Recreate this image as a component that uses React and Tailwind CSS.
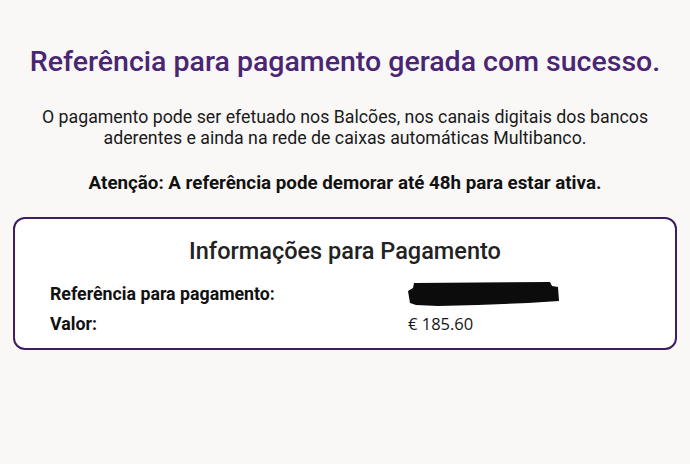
import React from 'react';

const Redacted = () => (
  <svg width="152" height="25" viewBox="0 0 152 25" className="block">
    <path
      d="M6 1 L142 0 L144 4 L150 5 L151 19 L120 21 L70 23 L30 24 L8 23 L2 21 L0 9 L5 6 Z"
      fill="#0c0c0c"
    />
  </svg>
);

export default function App() {
  return (
    <div
      className="min-h-screen w-full bg-[#f9f8f7] flex flex-col items-center pt-[44px] px-[13px]"
      style={{ fontFamily: 'Roboto, "Noto Sans", sans-serif' }}
    >
      <h1 className="text-[28.5px] leading-[36px] font-medium text-[#4a2572] text-center whitespace-nowrap">
        Referência para pagamento gerada com sucesso.
      </h1>
      <p className="mt-[27px] text-[17.75px] leading-[21px] text-[#1a1a1a] text-center whitespace-nowrap">
        O pagamento pode ser efetuado nos Balcões, nos canais digitais dos bancos
        <br />
        aderentes e ainda na rede de caixas automáticas Multibanco.
      </p>
      <p className="mt-[24px] text-[18.75px] leading-[21px] font-bold text-[#111] text-center whitespace-nowrap">
        Atenção: A referência pode demorar até 48h para estar ativa.
      </p>
      <div className="mt-[23px] w-full bg-white border-2 border-[#3d1f60] rounded-[12px] pt-[18px] pb-[12px] px-[35px]">
        <h2 className="text-[23.5px] leading-[28px] font-medium text-[#222] text-center">
          Informações para Pagamento
        </h2>
        <div className="mt-[17px] flex flex-col gap-[6px] text-[17.75px] leading-[24px] text-[#111]">
          <div className="flex items-center h-[24px]">
            <span className="w-[358px] font-bold whitespace-nowrap">Referência para pagamento:</span>
            <Redacted />
          </div>
          <div className="flex items-center h-[24px]">
            <span className="w-[358px] font-bold">Valor:</span>
            <span
              className="text-[16.5px] text-[#151515]"
              style={{ fontFamily: '"Open Sans", sans-serif' }}
            >
              € 185.60
            </span>
          </div>
        </div>
      </div>
    </div>
  );
}
